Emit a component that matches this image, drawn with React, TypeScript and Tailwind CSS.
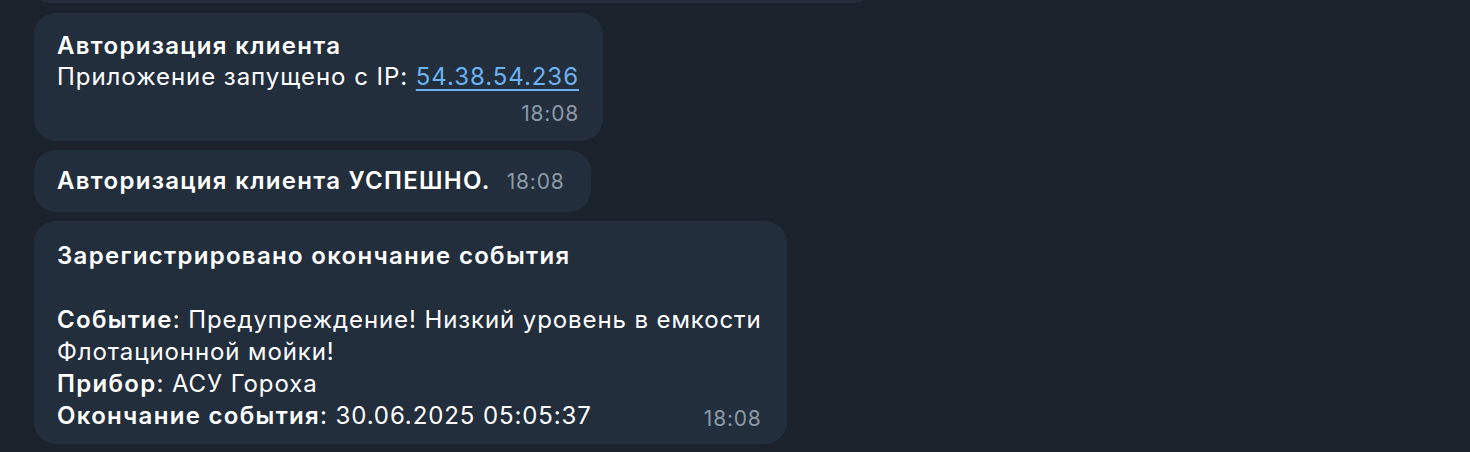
const font = { fontFamily: "Inter, 'Noto Sans', sans-serif" };

function Bubble({ className = "", children }: { className?: string; children?: React.ReactNode }) {
  return <div className={`rounded-[22px] bg-[#232e3c] text-white ${className}`}>{children}</div>;
}

function Time({ className = "" }: { className?: string }) {
  return <span className={`text-[21px] leading-[24px] tracking-[0.8px] text-[#8b98a7] ${className}`}>18:08</span>;
}

function B({ children }: { children: React.ReactNode }) {
  return <span className="font-semibold tracking-[1.3px]">{children}</span>;
}

export default function App() {
  return (
    <div className="min-h-[452px] bg-[#1c222b] pl-[34px] flex flex-col items-start gap-[10px] overflow-hidden" style={font}>
      {/* previous message, cut off at the top */}
      <Bubble className="-mt-[27px] h-[30px] w-[836px]" />

      <Bubble className="pl-[23px] pr-[24px] pt-[17px] pb-[15px] text-[24px] leading-[31px] tracking-[0.95px]">
        <div>
          <B>Авторизация клиента</B>
        </div>
        <div>
          Приложение запущено с IP:{" "}
          <a href="#" className="text-[#6ab2f2] underline underline-offset-[4px] decoration-[1.5px]">
            54.38.54.236
          </a>
        </div>
        <div className="mt-[10px] flex justify-end">
          <Time />
        </div>
      </Bubble>

      <Bubble className="-mt-[1px] flex items-baseline gap-[16px] pl-[23px] pr-[26px] py-[16px] text-[24px] leading-[30px] tracking-[0.9px]">
        <B>Авторизация клиента УСПЕШНО.</B>
        <Time />
      </Bubble>

      <Bubble className="-mt-[1px] pl-[23px] pr-[25px] pt-[19px] pb-[12px] text-[24px] leading-[32px] tracking-[0.9px]">
        <div>
          <B>Зарегистрировано окончание события</B>
        </div>
        <div className="h-[32px]" />
        <div>
          <B>Событие</B>: Предупреждение! Низкий уровень в емкости
        </div>
        <div>Флотационной мойки!</div>
        <div>
          <B>Прибор</B>: АСУ Гороха
        </div>
        <div className="flex items-baseline justify-between">
          <span>
            <B>Окончание события</B>: 30.06.2025 05:05:37
          </span>
          <Time className="translate-y-[2px]" />
        </div>
      </Bubble>
    </div>
  );
}
